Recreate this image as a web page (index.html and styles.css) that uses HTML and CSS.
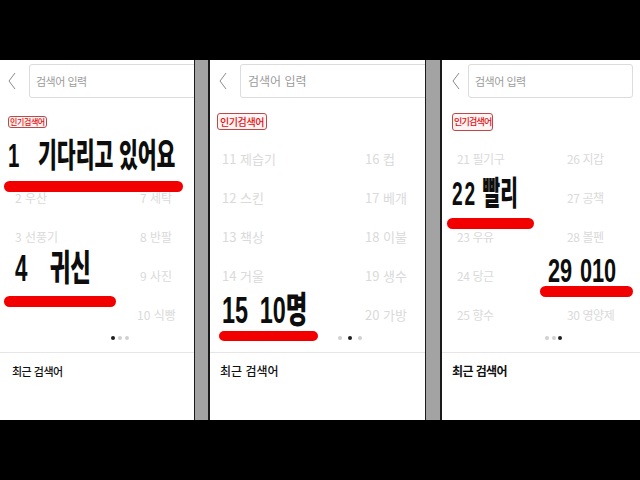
FILE: index.html
```html
<!DOCTYPE html>
<html lang="ko">
<head>
<meta charset="utf-8">
<link rel="stylesheet" href="styles.css">
</head>
<body>
<div class="strip">
  <section class="panel p1">
    <div class="search-row">
      <svg class="back" viewBox="0 0 8 18" width="8" height="18"><polyline points="7,1 1,9 7,17"/></svg>
      <div class="search-box">검색어 입력</div>
    </div>
    <div class="badge-row"><span class="badge">인기검색어</span></div>
    <ol class="ranks">
      <li></li><li>2 우산</li><li>3 선풍기</li><li></li><li></li>
      <li></li><li>7 세탁</li><li>8 반팔</li><li>9 사진</li><li class="wide">10 식빵</li>
    </ol>
    <div class="dots"><i class="on"></i><i></i><i></i></div>
    <div class="recent">최근 검색어</div>
    <div class="big b1a"><span class="n">1</span>기다리고 있어요</div>
    <div class="bar r1a"></div>
    <div class="big b1b"><span class="n">4</span>귀신</div>
    <div class="bar r1b"></div>
  </section>
  <div class="divider"></div>
  <section class="panel p2">
    <div class="search-row">
      <svg class="back" viewBox="0 0 8 18" width="8" height="18"><polyline points="7,1 1,9 7,17"/></svg>
      <div class="search-box">검색어 입력</div>
    </div>
    <div class="badge-row"><span class="badge">인기검색어</span></div>
    <ol class="ranks">
      <li>11 제습기</li><li>12 스킨</li><li>13 책상</li><li>14 거울</li><li></li>
      <li>16 컵</li><li>17 베개</li><li>18 이불</li><li>19 생수</li><li>20 가방</li>
    </ol>
    <div class="dots"><i></i><i class="on"></i><i></i></div>
    <div class="recent">최근 검색어</div>
    <div class="big b2"><span class="n">15</span>10명</div>
    <div class="bar r2"></div>
  </section>
  <div class="divider d2"></div>
  <section class="panel p3">
    <div class="search-row">
      <svg class="back" viewBox="0 0 8 18" width="8" height="18"><polyline points="7,1 1,9 7,17"/></svg>
      <div class="search-box">검색어 입력</div>
    </div>
    <div class="badge-row"><span class="badge">인기검색어</span></div>
    <ol class="ranks">
      <li>21 필기구</li><li></li><li>23 우유</li><li>24 당근</li><li>25 향수</li>
      <li>26 지갑</li><li>27 공책</li><li>28 볼펜</li><li></li><li>30 영양제</li>
    </ol>
    <div class="dots"><i></i><i></i><i class="on"></i></div>
    <div class="recent">최근 검색어</div>
    <div class="big b3a"><span class="n">22</span>빨리</div>
    <div class="bar r3a"></div>
    <div class="big b3b"><span class="n">29</span>010</div>
    <div class="bar r3b"></div>
  </section>
</div>
</body>
</html>
```
FILE: styles.css
```css
html, body {
  margin: 0;
  padding: 0;
  background: #000;
  width: 640px;
  height: 480px;
  overflow: hidden;
  font-family: "Noto Sans CJK KR", "Noto Sans", sans-serif;
}

.strip {
  margin-top: 60px;
  height: 360px;
  display: flex;
}

.panel {
  position: relative;
  background: #fff;
  overflow: hidden;
  display: flex;
  flex-direction: column;
}

.p1 { width: 194px; }
.p2 { width: 215px; }
.p3 { width: 198px; }

.divider {
  width: 16px;
  box-sizing: border-box;
  background: #a3a3a3;
  border-left: 1px solid #1a1a1a;
  border-right: 2px solid #1a1a1a;
}
.d2 { width: 17px; }

/* search row */
.search-row {
  display: flex;
  align-items: center;
  margin-top: 4px;
  height: 34px;
}
.back {
  flex: none;
  fill: none;
  stroke: #8a8a8a;
  stroke-width: 1;
}
.search-box {
  flex: none;
  box-sizing: border-box;
  height: 34px;
  border: 1px solid #dcdcdc;
  border-radius: 3px;
  color: #9b9b9b;
  font-size: 12px;
  line-height: 32px;
  padding-left: 6px;
  white-space: nowrap;
}
.p1 .back { margin-left: 8px; }
.p1 .search-box { margin-left: 13px; width: 200px; font-size: 11px; letter-spacing: -0.5px; }
.p2 .back { margin-left: 9px; }
.p2 .search-box { margin-left: 13px; width: 200px; padding-left: 7px; }
.p3 .back { margin-left: 10px; }
.p3 .search-box { margin-left: 8px; width: 165px; font-size: 11px; letter-spacing: -0.5px; }

/* badge */
.badge-row {
  height: 13px;
  margin-top: 17px;
  display: flex;
}
.badge {
  box-sizing: border-box;
  display: inline-block;
  border: 1px solid #b94a48;
  border-radius: 3px;
  background: #fff3f3;
  color: #e01010;
  font-size: 8px;
  line-height: 10px;
  padding: 0 1px;
  height: 12px;
  letter-spacing: -0.4px;
  font-weight: 500;
}
.p1 .badge { margin-left: 8px; margin-top: 1px; }
.p2 .badge { margin-left: 7px; margin-top: -2px; height: 17px; line-height: 15px; font-size: 10px; padding: 0 2px; }
.p3 .badge { margin-left: 10px; margin-top: -2px; height: 18px; line-height: 16px; font-size: 9px; letter-spacing: -0.8px; }

/* ranks */
.ranks {
  list-style: none;
  margin: 11px 0 0 0;
  padding: 0;
  display: grid;
  grid-template-rows: repeat(5, 39px);
  grid-auto-flow: column;
  color: #dadada;
  font-size: 13px;
  white-space: nowrap;
}
.ranks li {
  align-self: center;
  line-height: 16px;
}
.p1 .ranks { padding-left: 15px; grid-template-columns: 125px 1fr; font-size: 12px; }
.p1 .ranks .wide { margin-left: -3px; }
.p2 .ranks { padding-left: 12px; grid-template-columns: 143px 1fr; }
.p3 .ranks { padding-left: 15px; grid-template-columns: 110px 1fr; font-size: 12px; letter-spacing: -0.4px; }

/* dots */
.dots {
  height: 8px;
  display: flex;
  align-items: center;
  gap: 3px;
}
.dots i {
  width: 4px;
  height: 4px;
  border-radius: 50%;
  background: #d0d0d0;
}
.dots i.on { background: #1f1f1f; }
.p1 .dots { padding-left: 111px; }
.p2 .dots { padding-left: 128px; gap: 6px; }
.p3 .dots { padding-left: 103px; gap: 2.5px; }

/* recent */
.recent {
  margin-top: 10px;
  border-top: 1px solid #e6e6e6;
  padding-top: 10px;
  font-size: 11px;
  line-height: 16px;
  color: #111;
  font-weight: 500;
}
.p1 .recent { padding-left: 12px; letter-spacing: -0.5px; }
.p2 .recent { padding-left: 10px; font-size: 12px; }
.p3 .recent { padding-left: 10px; font-size: 12px; font-weight: 700; letter-spacing: -0.6px; }

/* annotation overlays */
.big {
  position: absolute;
  color: #0d0d0d;
  font-family: "Liberation Sans", "Noto Sans CJK KR", sans-serif;
  font-weight: 900;
  line-height: 0.8;
  white-space: nowrap;
  transform-origin: 0 0;
}
.big .n { display: inline-block; }
.bar {
  position: absolute;
  background: #f20000;
  border-radius: 6px;
}

.b1a { left: 8px; top: 83px; font-size: 33px; transform: scaleX(0.62); }
.b1a .n { margin-right: 30px; }
.r1a { left: 4px; top: 121px; width: 179px; height: 11px; }
.b1b { left: 15px; top: 195px; font-size: 36px; transform: scaleX(0.62); }
.b1b .n { margin-right: 36px; }
.r1b { left: 4px; top: 236px; width: 112px; height: 11px; }

.b2 { left: 12px; top: 237px; font-size: 36px; transform: scaleX(0.65); }
.b2 .n { margin-right: 18px; }
.r2 { left: 9px; top: 271px; width: 99px; height: 10px; }

.b3a { left: 10px; top: 121px; font-size: 33px; transform: scaleX(0.58); }
.b3a .n { margin-right: 10px; letter-spacing: 3px; }
.r3a { left: 5px; top: 158px; width: 87px; height: 11px; }
.b3b { left: 106px; top: 197px; font-size: 34px; transform: scaleX(0.64); }
.b3b .n { margin-right: 12px; }
.r3b { left: 98px; top: 226px; width: 93px; height: 11px; }
```
